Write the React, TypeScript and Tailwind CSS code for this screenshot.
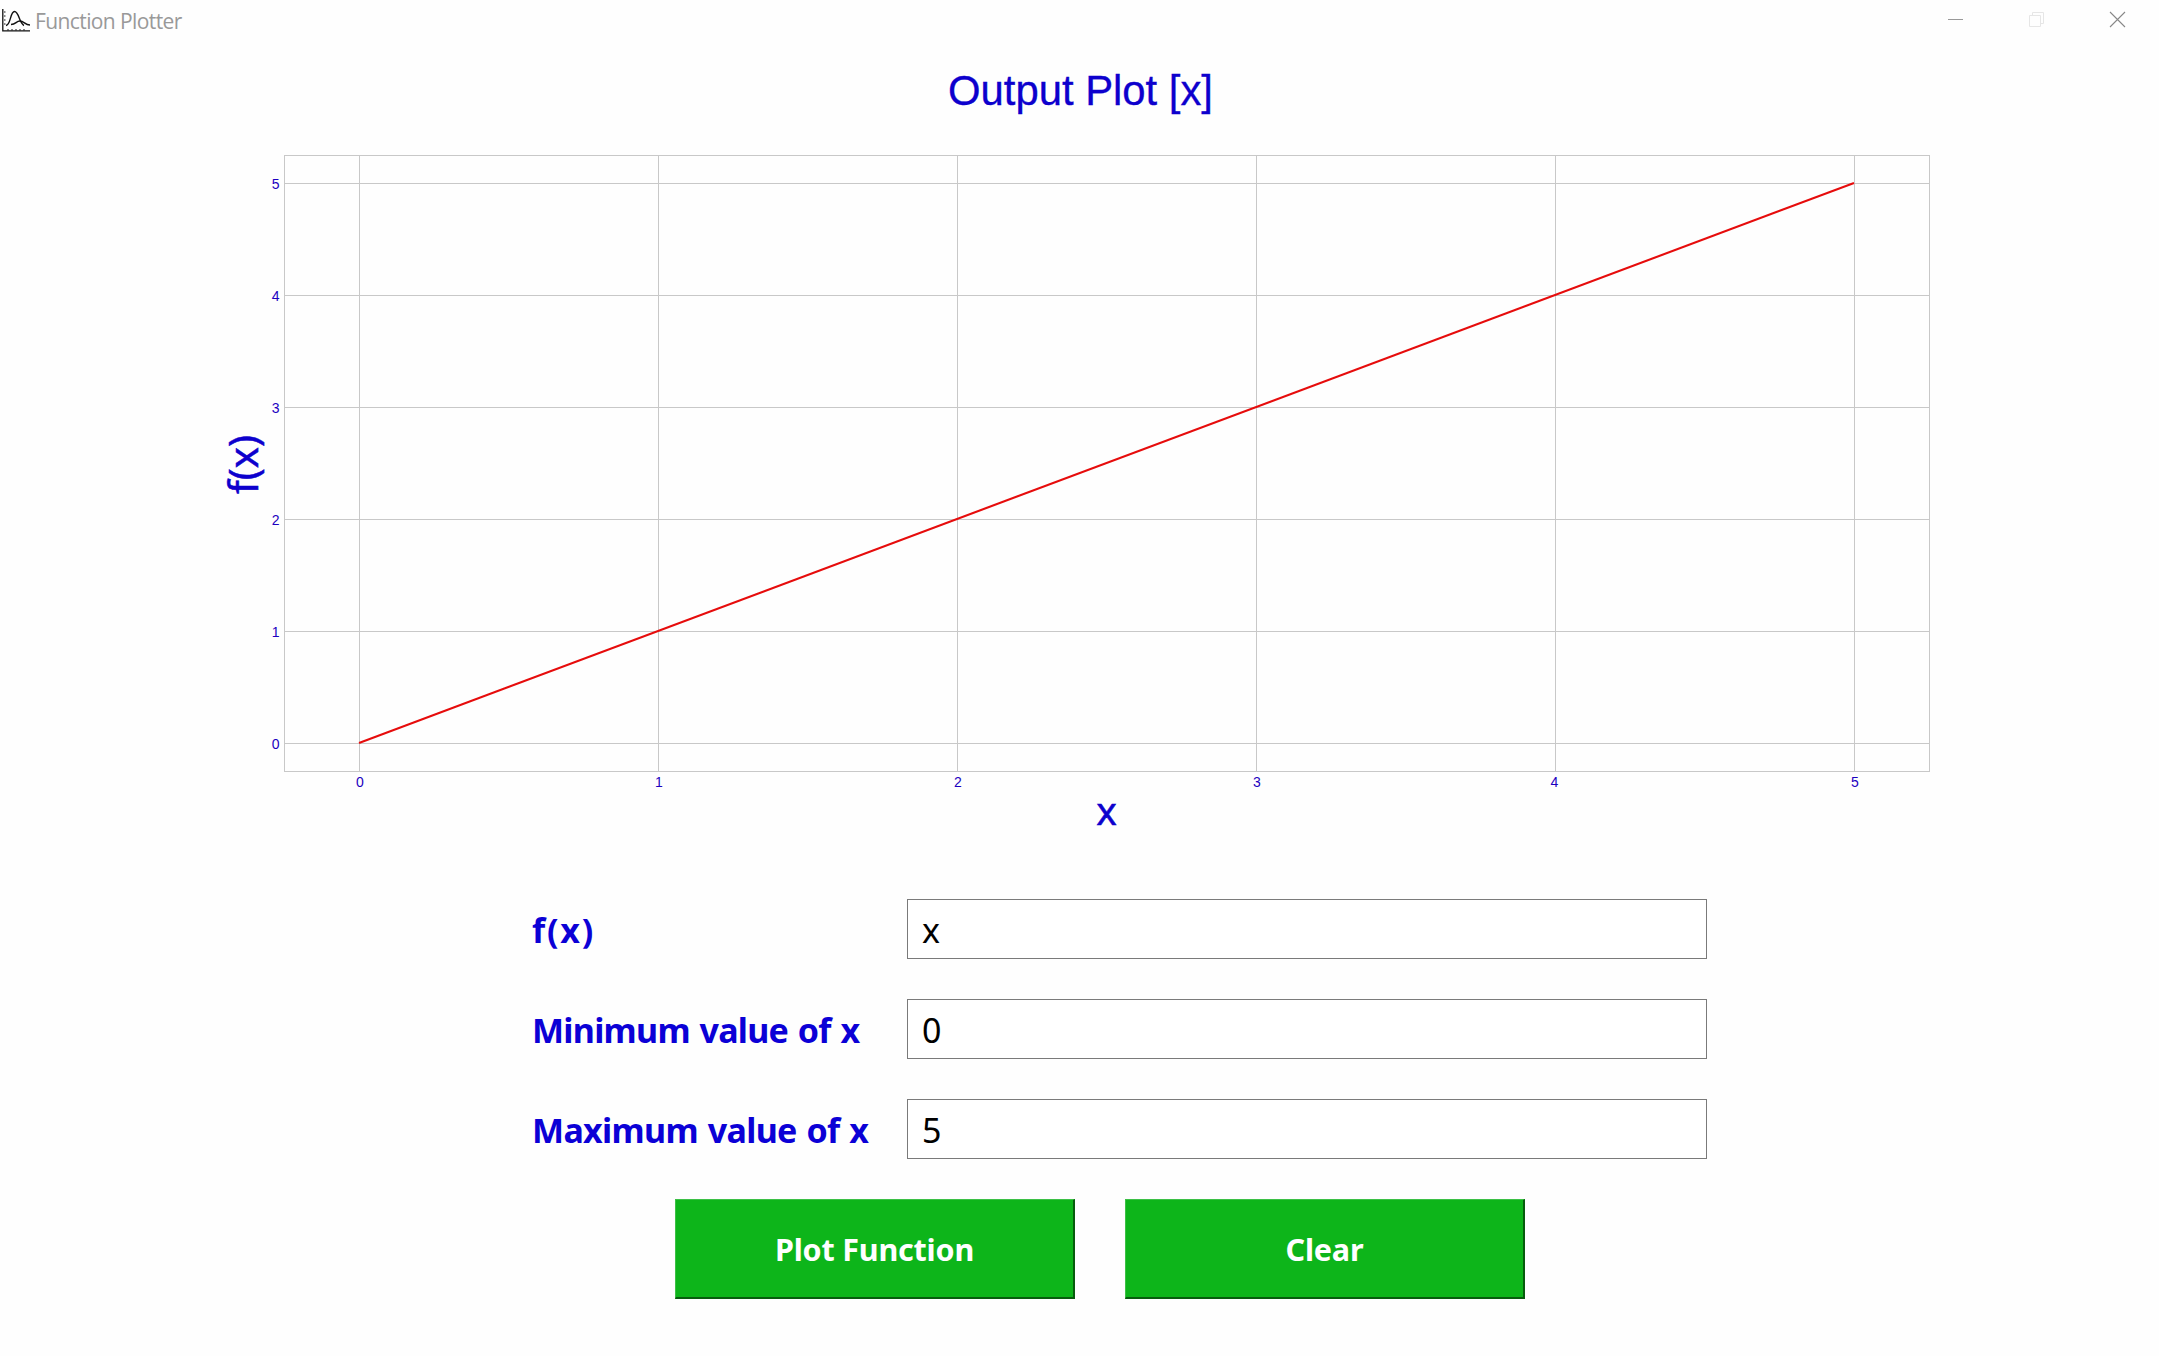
import React from 'react';

const ticks = [0, 1, 2, 3, 4, 5];
const px = (v: number) => 359.5 + v * 299;
const py = (v: number) => 743.5 - 35 - v * 112;

function Chart() {
  return (
    <svg className="block h-[820px] w-[2159px]" viewBox="0 0 2159 820" fontFamily="'Liberation Sans', Arial, sans-serif">
      <text x="948" y="70" fontSize="41.6" fill="#0d00cd" stroke="#0d00cd" strokeWidth="0.3" textLength="265" lengthAdjust="spacingAndGlyphs">Output Plot [x]</text>
      <g stroke="#c8c8c8" strokeWidth="1" fill="none">
        <rect x="284.5" y="120.5" width="1645" height="616" />
        {ticks.map((t) => (
          <React.Fragment key={t}>
            <line x1={px(t)} x2={px(t)} y1="120.5" y2="736.5" />
            <line x1="284.5" x2="1929.5" y1={py(t)} y2={py(t)} />
          </React.Fragment>
        ))}
      </g>
      <line x1={px(0) - 0.5} y1={py(0) - 0.5} x2={px(5) - 0.5} y2={py(5) - 0.5} stroke="#e60c0c" strokeWidth="2.1" />
      <g fontSize="14.67" fill="#1c00c0">
        {ticks.map((t) => (
          <React.Fragment key={t}>
            <text x={px(t) + (t === 4 ? -1 : 0.3)} y="752" textAnchor="middle" textLength="7.8" lengthAdjust="spacingAndGlyphs">{t}</text>
            <text x="279.5" y={py(t) + 5.5} textAnchor="end" textLength="7.8" lengthAdjust="spacingAndGlyphs">{t}</text>
          </React.Fragment>
        ))}
      </g>
      <g fontFamily="'Noto Sans', Tahoma, sans-serif" fill="#0d00cd" stroke="#0d00cd" strokeWidth="0.5" fontSize="40">
        <text x="1106.5" y="789.5" textAnchor="middle" fontSize="39">x</text>
        <text transform="translate(257.500 459) rotate(-90)" textLength="59" lengthAdjust="spacingAndGlyphs">f(x)</text>
      </g>
    </svg>
  );
}

function TitleBar() {
  return (
    <header className="flex h-[35px] items-start">
      <svg className="mt-2 ml-[2px] h-6 w-7" viewBox="0 0 28 24" fill="none" stroke="#111">
        <path d="M.8 1v21.8H28" strokeWidth="1.3" />
        <path d="M2 4h1.5M2 8h1.5M2 12h1.5M2 16h1.5M6 21v1.5M10 21v1.5M14 21v1.5M18 21v1.5M22 21v1.5" />
        <path d="M4 17.500C9 17 8 3.500 12.500 3.500S17 15 22 17.500" strokeWidth="1.4" />
        <path d="M9 16.500c5 0 5-3.500 9-3.500s5 4 10 4" strokeWidth="1.4" />
      </svg>
      <h1 className="mt-[7px] ml-[5px] flex-1 font-['Open_Sans',sans-serif] text-[21px] leading-7 tracking-[-0.6px] whitespace-nowrap text-[#999]">
        Function Plotter
      </h1>
      <svg className="h-[35px] w-[211px]" viewBox="1948 0 211 35" fill="none">
        <path d="M1948 19.500h15" stroke="#999" />
        <path d="M2029.500 15.500h11v11h-11zM2032.500 15.500v-3h11v11h-3" stroke="#e6e6e6" />
        <path d="M2110 12l15 15M2125 12l-15 15" stroke="#888" strokeWidth="1.1" />
      </svg>
    </header>
  );
}

const fields = [
  { label: 'f(x)', value: 'x', tracking: 'tracking-[1.8px]' },
  { label: 'Minimum value of x', value: '0', tracking: 'tracking-[-0.72px] [word-spacing:1.5px]' },
  { label: 'Maximum value of x', value: '5', tracking: 'tracking-[-0.66px] [word-spacing:1.5px]' },
];

function Field({ label, value, tracking }: { label: string; value: string; tracking: string }) {
  return (
    <div className="flex h-[60px] items-center">
      <label className={`w-[375px] pt-px font-['Noto_Sans',sans-serif] text-[34px] leading-[58px] font-bold whitespace-nowrap text-[#0b00d6] ${tracking}`}>
        {label}
      </label>
      <input
        readOnly
        value={value}
        className="h-[60px] w-[800px] border border-[#7a7a7a] bg-white px-3.5 pt-px font-['Noto_Sans',sans-serif] text-[34px] text-black outline-none"
      />
    </div>
  );
}

function ActionButton({ label }: { label: string }) {
  return (
    <button className="flex h-[100px] w-[400px] items-center justify-center border-t border-r-2 border-b-2 border-l border-t-[#3cc046] border-r-[#075c0d] border-b-[#075c0d] border-l-[#3cc046] bg-[#0db51a] pt-[3px] font-['Noto_Sans',sans-serif] text-[30.500px] font-bold tracking-[-0.2px] whitespace-nowrap text-white">
      {label}
    </button>
  );
}

export default function App() {
  return (
    <div className="flex h-[1356px] w-[2159px] flex-col overflow-hidden bg-[#fefefe]">
      <TitleBar />
      <Chart />
      <form className="mt-11 ml-[532px] flex flex-col gap-10">
        {fields.map((f) => (
          <Field key={f.label} {...f} />
        ))}
        <div className="ml-[143px] flex gap-[50px]">
          <ActionButton label="Plot Function" />
          <ActionButton label="Clear" />
        </div>
      </form>
    </div>
  );
}
